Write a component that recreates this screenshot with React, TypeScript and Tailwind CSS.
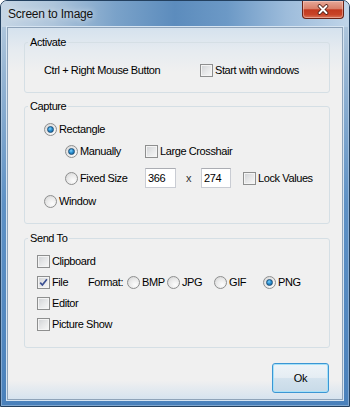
import React from "react";

const font = "font-['Liberation_Sans',Arial,sans-serif]";

function Check({ checked = false }: { checked?: boolean }) {
  return (
    <span className="flex h-[13px] w-[13px] shrink-0 items-center justify-center border border-[#8e8f8f] bg-[linear-gradient(135deg,#cfd1d4_0%,#e6e7e8_50%,#f8f8f8_100%)] shadow-[inset_0_0_0_1px_#f4f4f4]">
      {checked && (
        <svg width="11" height="11" viewBox="0 0 11 11">
          <path d="M2.2 5.6 L4.4 8 L8.9 2.3" fill="none" stroke="#3a4f92" strokeWidth="1.7" />
        </svg>
      )}
    </span>
  );
}

function Radio({ checked = false }: { checked?: boolean }) {
  return (
    <span className="flex h-[13px] w-[13px] shrink-0 items-center justify-center rounded-full border border-[#8e8f8f] bg-[radial-gradient(circle_at_65%_70%,#fdfdfd_0%,#e8e8e8_55%,#cfcfcf_100%)]">
      {checked && (
        <span className="h-[7px] w-[7px] rounded-full border border-[#1d4e77] bg-[radial-gradient(circle_at_40%_35%,#7fd3ff_0%,#2a8fd0_45%,#0f5a90_100%)]" />
      )}
    </span>
  );
}

function Group({ title, children, className = "" }: { title: string; children: React.ReactNode; className?: string }) {
  return (
    <fieldset className={`ml-[16px] mr-[12px] rounded-[3px] border border-[#d5dfe5] ${className}`}>
      <legend className="ml-[3px] px-[2px] leading-[13px]">{title}</legend>
      {children}
    </fieldset>
  );
}

function Box({ value, w }: { value: string; w: string }) {
  return (
    <div className={`flex h-[20px] ${w} items-center border border-[#c9ccd3] border-t-[#abadb3] bg-white pl-[2px]`}>
      {value}
    </div>
  );
}

export default function App() {
  return (
    <div className={`h-[407px] w-[350px] bg-white text-[11px] tracking-[-0.4px] text-black ${font}`}>
      <div className="flex h-[407px] w-[350px] flex-col rounded-t-[7px] border border-[#23405f] bg-[linear-gradient(180deg,#bccfe1_0%,#96b5d3_18%,#5e91c5_50%,#4a81bb_100%)] shadow-[inset_0_0_0_1px_rgba(255,255,255,0.3)]">
        {/* title bar */}
        <div className="flex h-[26px] items-start rounded-t-[6px] bg-[linear-gradient(90deg,#c6d6e5_0%,#aec5db_15%,#7aa2c9_33%,#5c8cbd_50%,#6c99c6_65%,#9dbcdb_82%,#c0d5e9_100%)]">
          <div className="flex h-[26px] flex-1 items-center pl-[7px] text-[12px] tracking-[-0.2px] text-[#111] [text-shadow:0_0_6px_rgba(255,255,255,0.9)]">
            Screen to Image
          </div>
          <div className="mr-[5px] flex h-[18px] w-[42px] items-center justify-center rounded-b-[4px] border border-t-0 border-[#6a2317] bg-[linear-gradient(180deg,#e6a898_0%,#d9806a_45%,#c2391f_52%,#c84428_80%,#d9745a_100%)] shadow-[inset_0_0_0_1px_rgba(255,220,210,0.45)]">
            <svg width="12" height="11" viewBox="0 0 12 11">
              <path d="M2.5 2 L9.5 9 M9.5 2 L2.5 9" stroke="#4a1a12" strokeWidth="3.6" strokeLinecap="round" />
              <path d="M2.5 2 L9.5 9 M9.5 2 L2.5 9" stroke="#ffffff" strokeWidth="2" strokeLinecap="round" />
            </svg>
          </div>
        </div>

        {/* client */}
        <div className="flex flex-1 flex-col px-[6px] pb-[6px]">
          <div className="flex flex-1 flex-col border border-[#8ea3b9] bg-[linear-gradient(180deg,#d5e2ee_0%,#e6ebf0_6%,#f0f0f0_12%,#f0f0f0_95%,#d6e3ef_100%)] shadow-[0_0_0_1px_#d6e4f1]">
            <Group title="Activate" className="mt-[8px]">
              <div className="flex items-center pb-[15px] pl-[19px] pt-[15px]">
                <span className="w-[156px] leading-[13px]">Ctrl + Right Mouse Button</span>
                <Check />
                <span className="ml-[2px] leading-[13px]">Start with windows</span>
              </div>
            </Group>

            <Group title="Capture" className="mt-[7px]">
              <div className="flex flex-col pb-[15px] pl-[19px] pt-[10px]">
                <div className="flex h-[13px] items-center gap-[2px]">
                  <Radio checked />
                  <span>Rectangle</span>
                </div>
                <div className="mt-[9px] flex h-[13px] items-center pl-[21px]">
                  <div className="flex w-[80px] items-center gap-[2px]">
                    <Radio checked />
                    <span>Manually</span>
                  </div>
                  <Check />
                  <span className="ml-[2px]">Large Crosshair</span>
                </div>
                <div className="mt-[10px] flex h-[20px] items-center pl-[21px]">
                  <div className="flex w-[80px] items-center gap-[2px]">
                    <Radio />
                    <span>Fixed Size</span>
                  </div>
                  <Box value="366" w="w-[31px]" />
                  <span className="w-[25px] text-center text-[#333]">x</span>
                  <Box value="274" w="w-[30px]" />
                  <span className="ml-[12px]">
                    <Check />
                  </span>
                  <span className="ml-[2px]">Lock Values</span>
                </div>
                <div className="mt-[7px] flex h-[13px] items-center gap-[2px]">
                  <Radio />
                  <span>Window</span>
                </div>
              </div>
            </Group>

            <Group title="Send To" className="mt-[8px]">
              <div className="flex flex-col gap-[8px] pb-[16px] pl-[12px] pt-[10px]">
                <div className="flex h-[13px] items-center gap-[2px]">
                  <Check />
                  <span>Clipboard</span>
                </div>
                <div className="flex h-[13px] items-center">
                  <div className="flex w-[51px] items-center gap-[2px]">
                    <Check checked />
                    <span>File</span>
                  </div>
                  <span className="w-[39px]">Format:</span>
                  <div className="flex w-[40px] items-center gap-[2px]">
                    <Radio />
                    <span>BMP</span>
                  </div>
                  <div className="flex w-[47px] items-center gap-[2px]">
                    <Radio />
                    <span>JPG</span>
                  </div>
                  <div className="flex w-[49px] items-center gap-[2px]">
                    <Radio />
                    <span>GIF</span>
                  </div>
                  <div className="flex items-center gap-[2px]">
                    <Radio checked />
                    <span>PNG</span>
                  </div>
                </div>
                <div className="flex h-[13px] items-center gap-[2px]">
                  <Check />
                  <span>Editor</span>
                </div>
                <div className="flex h-[13px] items-center gap-[2px]">
                  <Check />
                  <span>Picture Show</span>
                </div>
              </div>
            </Group>

            <div className="mr-[13px] mt-[15px] flex justify-end">
              <div className="flex h-[30px] w-[57px] items-center justify-center rounded-[3px] border border-[#3b96d4] bg-[linear-gradient(180deg,#eef4f8_0%,#e5edf3_48%,#d3e2ed_52%,#c8dae8_100%)] shadow-[inset_0_0_0_1px_#a6e1f8]">
                Ok
              </div>
            </div>
          </div>
        </div>
      </div>
    </div>
  );
}
